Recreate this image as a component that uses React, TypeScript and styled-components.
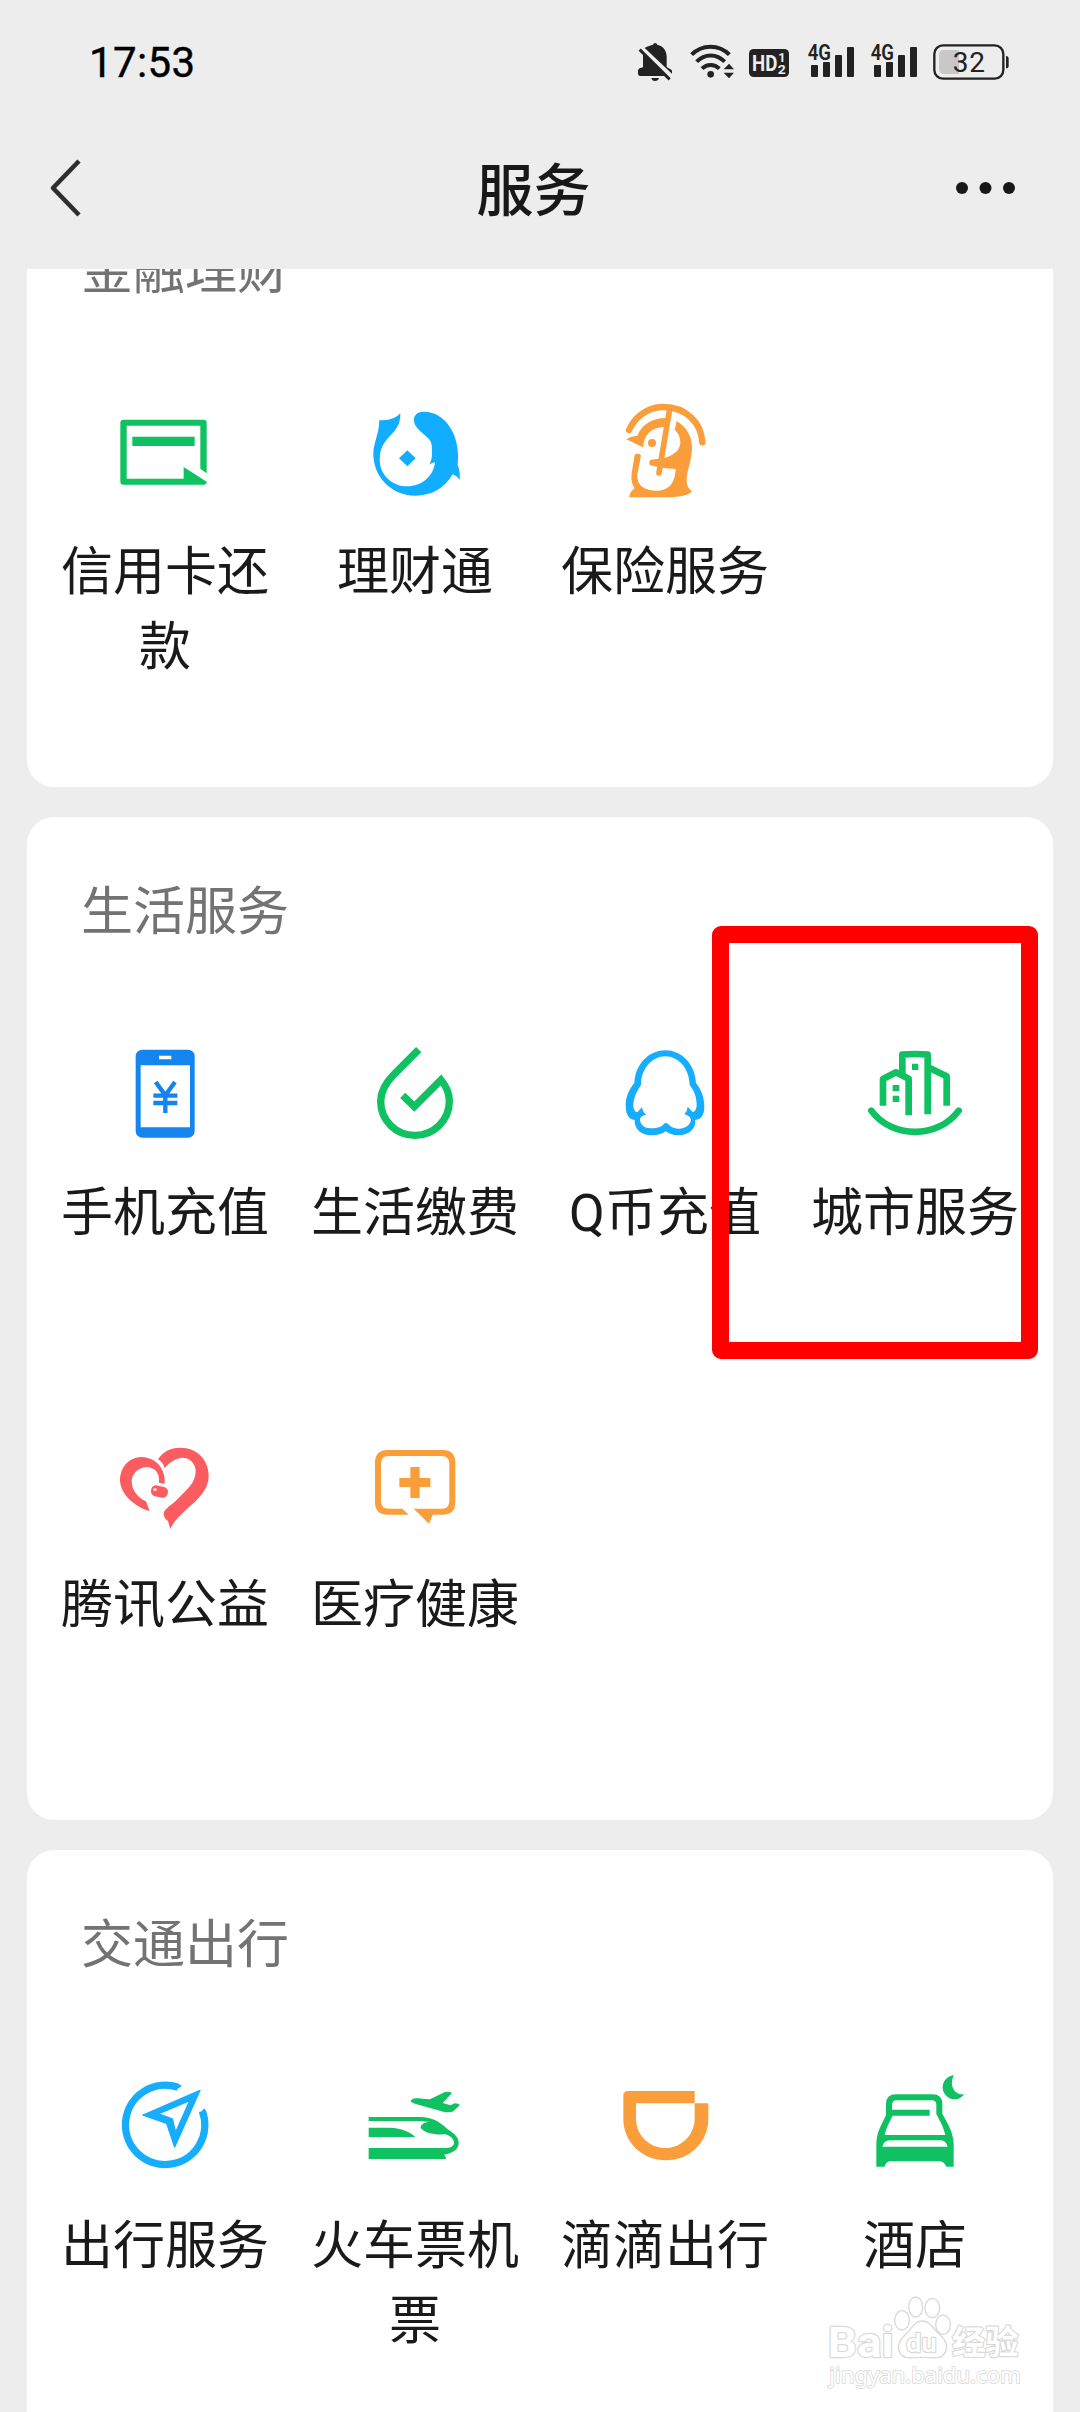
import React from "react";
import styled, { createGlobalStyle } from "styled-components";

const GREEN = "#0fc160";
const BLUE = "#17adff";
const ORANGE = "#fa9e3b";
const RED = "#fa5c5f";
const INK = "#222222";

const GlobalStyle = createGlobalStyle`
  * { box-sizing: border-box; }
  body {
    margin: 0;
    background: #ededed;
    font-family: Roboto, "Noto Sans CJK SC", sans-serif;
  }
`;

const Screen = styled.div`
  position: relative;
  display: flex;
  flex-direction: column;
  width: 1080px;
  height: 2412px;
  overflow: hidden;
  background: #ededed;
`;

const StatusBar = styled.div`
  display: flex;
  align-items: center;
  justify-content: space-between;
  height: 125px;
  padding: 0 70px 0 89px;
`;

const Clock = styled.span`
  font-size: 42px;
  font-weight: 400;
  line-height: 50px;
  letter-spacing: 0.4px;
  color: #000;
  -webkit-text-stroke: 0.4px #000;
`;

const StatusIcons = styled.div`
  display: flex;
  align-items: center;
`;

const StatusIcon = styled.svg<{ $width: number; $gap?: number }>`
  display: block;
  width: ${(p) => p.$width}px;
  height: 45px;
  margin-left: ${(p) => p.$gap ?? 0}px;
  fill: ${INK};
`;

const NavBar = styled.header`
  display: grid;
  grid-template-columns: 120px 1fr 120px;
  align-items: center;
  height: 144px;
  padding: 0 50px 18px 48px;
`;

const NavTitle = styled.h1`
  margin: 0;
  padding: 7px 11px 0 0;
  font-size: 57px;
  font-weight: 500;
  line-height: 80px;
  text-align: center;
  color: #181818;
`;

const NavIcon = styled.svg<{ $width: number; $end?: boolean }>`
  display: block;
  width: ${(p) => p.$width}px;
  height: 64px;
  justify-self: ${(p) => (p.$end ? "end" : "start")};
`;

const Content = styled.main`
  flex: 1;
  display: flex;
  flex-direction: column;
  gap: 30px;
  padding: 0 27px;
  overflow: hidden;
`;

const Card = styled.section<{ $scrolled?: boolean }>`
  flex: none;
  margin-top: ${(p) => (p.$scrolled ? "-93px" : "0")};
  padding: 0 13px 3px;
  border-radius: 27px;
  background: #fff;
`;

const CardTitle = styled.h2`
  height: 216px;
  margin: 0;
  padding: 58px 0 0 41px;
  font-size: 52px;
  font-weight: 400;
  line-height: 75px;
  color: #737373;
`;

const Grid = styled.div`
  display: grid;
  grid-template-columns: repeat(4, 250px);
  grid-auto-rows: 392px;
`;

const Item = styled.div`
  display: flex;
  flex-direction: column;
  align-items: center;
`;

const ItemIcon = styled.svg`
  display: block;
  width: 120px;
  height: 120px;
`;

const Label = styled.span`
  width: 212px;
  margin-top: 23px;
  font-size: 52px;
  line-height: 75px;
  text-align: center;
  color: #1a1a1a;
`;

const Highlight = styled.div`
  position: absolute;
  left: 712px;
  top: 926px;
  width: 326px;
  height: 433px;
  border: 17px solid #ff0000;
  border-radius: 9px;
`;

const Watermark = styled.svg`
  position: absolute;
  left: 826px;
  top: 2294px;
  width: 198px;
  height: 97px;
`;

type Service = { name: string; box: string; art: React.ReactNode };

const finance: Service[] = [
  {
    name: "信用卡还款",
    box: "195 37",
    art: (
      <g fill={GREEN}>
        <path d="M250 120H491Q500 120 500 129V281L481 267V138H260V297H431V262L500 306Q500 315 491 315H250Q241 315 241 306V129Q241 120 250 120Z" />
        <path d="M277 171H464V199H277Z" />
      </g>
    ),
  },
  {
    name: "理财通",
    box: "75 37",
    art: (
      <g fill="#11adff">
        <path d="M148 121Q190 125 211 101Q213 130 193 155C170 181 149 197 149 240C150 290 190 320 232 320C274 320 310 292 315 248Q306 249 298 255C304 244 306 235 306 218C306 190 306 185 284 166C262 147 250 137 252 115C257 98 272 96 284 96C345 98 383 160 384 225Q384 242 383 256Q391 275 389 300Q380 288 368 284C342 328 302 348 257 348C185 348 130 292 130 222C130 190 147 165 148 121Z" />
        <path d="M232 212L257 236L232 260L207 236Z" />
      </g>
    ),
  },
  {
    name: "保险服务",
    box: "825 37",
    art: (
      <g fill={ORANGE} stroke="none">
        <path d="M897 151C925 92 975 82 1000 82C1068 82 1114 130 1117 188" fill="none" stroke={ORANGE} strokeWidth="19" strokeLinecap="round" />
        <path d="M1019 88L987 280" fill="none" stroke={ORANGE} strokeWidth="17" strokeLinecap="round" />
        <path d="M889 179Q905 168 922 169C935 130 975 113 1012 115L1008 142C965 140 942 165 939 203Z" />
        <circle cx="966" cy="190" r="12" />
        <path d="M1040 124C1070 142 1087 172 1086 206C1085 245 1070 275 1070 300C1070 322 1078 326 1086 336C1070 350 1040 353 1000 353H897Q900 335 914 326C905 312 903 300 905 280L914 226Q922 217 933 227L922 285C920 318 945 333 980 333C1025 333 1035 300 1037 268L1000 265L960 257Q955 248 962 240L1005 235C1042 222 1052 205 1051 185C1050 168 1042 158 1034 150Z" />
      </g>
    ),
  },
];

const living: Service[] = [
  {
    name: "手机充值",
    box: "195 39",
    art: (
      <g>
        <rect x="287" y="89" width="177" height="264" rx="20" fill="#1485ee" />
        <path d="M302 136H450V322H302ZM357 107H394V118H357Z" fill="#fff" />
        <path d="M347 186L376 226L405 186M340 227H412M340 249H412M376 222V279" fill="none" stroke="#1485ee" strokeWidth="13" />
      </g>
    ),
  },
  {
    name: "生活缴费",
    box: "945 39",
    art: (
      <path d="M1136 89L1062 163C1035 190 1022 215 1022 244C1022 302 1068 346 1125 346C1182 346 1228 300 1228 244C1228 222 1220 200 1203 180L1123 260L1088 226" fill="none" stroke={GREEN} strokeWidth="22" />
    ),
  },
  {
    name: "Q币充值",
    box: "135 369",
    art: (
      <path
        fill={BLUE}
        fillRule="evenodd"
        d="M316 421C365 421 405 462 408 519C425 540 433 565 433 590C433 612 425 628 406 630C408 655 388 676 355 676C338 676 325 670 317 664C308 670 295 676 275 676C245 676 222 658 224 630C205 628 197 612 197 585C197 560 208 537 223 519C226 462 267 421 316 421ZM316 439C278 439 243 475 243 525C228 548 220 565 220 590C222 602 228 608 233 606L246 591C247 602 252 608 259 614Q240 618 240 628C240 645 255 655 272 655C295 655 308 648 312 641Q318 637 324 641C330 650 345 656 360 656C382 655 393 640 393 628Q388 616 373 613Q382 604 383 590L397 605C403 608 410 598 410 585C410 560 402 542 389 525C388 475 355 439 316 439Z"
      />
    ),
  },
  {
    name: "城市服务",
    box: "885 369",
    art: (
      <g fill="none" stroke={GREEN} strokeWidth="20" strokeLinejoin="round">
        <path d="M969 587V507L1008 487L1046 506V616M1027 494V434Q1065 430 1103 434V613M1104 472L1160 499V587" />
        <path d="M934 602C995 687 1135 687 1196 602" strokeLinecap="round" />
        <path d="M1056 461H1075V480H1056ZM998 525H1018V544H998ZM998 557H1018V576H998Z" fill={GREEN} stroke="none" />
      </g>
    ),
  },
  {
    name: "腾讯公益",
    box: "195 15",
    art: (
      <g fill={RED}>
        <path d="M354 118C370 92 395 83 422 83C470 83 508 120 506 170C504 215 465 245 435 272C412 293 398 310 391 327L384 303C376 298 370 290 371 279C375 265 395 255 410 240C440 208 468 190 467 150C464 125 445 112 425 113C405 115 388 128 374 144Q370 128 354 118Z" />
        <path d="M329 273L318 244C292 232 275 210 275 183C276 160 295 143 318 141C345 141 360 160 357 188L374 192C378 150 350 112 305 111C265 112 240 143 240 182C243 225 285 260 329 273Z" />
        <rect x="333" y="198" width="51" height="33" rx="15" transform="rotate(12 358 214)" />
        <ellipse cx="345" cy="209" rx="6" ry="4" fill="#fff" opacity="0.8" />
      </g>
    ),
  },
  {
    name: "医疗健康",
    box: "945 15",
    art: (
      <g fill={ORANGE}>
        <path d="M1043 90H1208Q1246 90 1246 128V246Q1246 284 1208 284H1178L1167 311L1121 266H1205Q1228 266 1228 243V131Q1228 108 1205 108H1046Q1023 108 1023 131V243Q1023 266 1046 266H1087L1106 284H1043Q1005 284 1005 246V128Q1005 90 1043 90Z" />
        <path d="M1078 174H1111V141H1139V174H1171V201H1139V234H1111V201H1078Z" />
      </g>
    ),
  },
];

const travel: Service[] = [
  {
    name: "出行服务",
    box: "195 51",
    art: (
      <g>
        <path d="M414 115A119 119 0 1 0 487 186" fill="none" stroke={BLUE} strokeWidth="22" />
        <path d="M407 104Q420 104 425 110Q420 118 403 122ZM480 204Q483 185 493 178Q500 190 501 204Z" fill={BLUE} />
        <path fillRule="evenodd" fill={BLUE} stroke={BLUE} strokeWidth="4" strokeLinejoin="round" d="M480 124L309 198L380 223L404 294ZM449 155L355 195L397 210L407 250Z" />
      </g>
    ),
  },
  {
    name: "火车票机票",
    box: "945 51",
    art: (
      <g fill={GREEN}>
        <path d="M986 204H1145C1185 206 1205 225 1222 240C1245 255 1256 265 1256 282C1256 300 1240 312 1213 317L1219 330H986V297H1210C1235 297 1243 290 1242 278C1238 265 1225 258 1215 256C1180 258 1150 250 1142 236C1142 225 1155 219 1172 219Q1155 217 1140 216H986Z" />
        <path d="M986 236H1050C1085 238 1110 248 1126 264H986Z" />
        <path d="M1112 156C1118 143 1135 148 1170 151L1213 130Q1225 126 1236 132L1208 162L1232 169L1240 164Q1252 161 1260 168L1240 187Q1230 192 1210 188L1125 164Q1113 161 1112 156Z" />
      </g>
    ),
  },
  {
    name: "滴滴出行",
    box: "135 51",
    art: (
      <path fill={ORANGE} fillRule="evenodd" d="M204 126H404V163H445V210C445 280 388 334 318 334C248 334 190 280 190 210V140Q190 126 204 126ZM228 163V212C230 260 270 297 316 297C362 297 402 260 404 212V163Z" />
    ),
  },
  {
    name: "酒店",
    box: "885 51",
    art: (
      <g fill={GREEN}>
        <path
          fillRule="evenodd"
          d="M978 199C960 235 949 255 949 285V353H973Q979 337 993 337H1137Q1152 337 1159 353H1181V285C1181 255 1165 225 1147 195V165Q1147 136 1117 136H1008Q978 136 978 165ZM996 182V168Q996 154 1010 154H1116Q1129 154 1129 168V195C1145 225 1150 235 1156 258H974C978 240 985 225 998 200H1109V182ZM967 293Q972 274 990 274H1142Q1158 275 1163 293Z"
        />
        <path d="M1182 79A36 36 0 1 0 1213 136C1185 140 1165 110 1182 79Z" />
      </g>
    ),
  },
];

const Services = ({ title, items, scrolled }: { title: string; items: Service[]; scrolled?: boolean }) => (
  <Card $scrolled={scrolled}>
    <CardTitle>{title}</CardTitle>
    <Grid>
      {items.map((s) => (
        <Item key={s.name}>
          <ItemIcon viewBox={`${s.box} 360 360`}>{s.art}</ItemIcon>
          <Label>{s.name}</Label>
        </Item>
      ))}
    </Grid>
  </Card>
);

const Signal = ({ gap }: { gap: number }) => (
  <StatusIcon $width={48} $gap={gap} viewBox="621 60 144 135">
    <text x="623" y="121" fontFamily="Roboto" fontSize="64" fontWeight="600" textLength="70" lengthAdjust="spacingAndGlyphs">4G</text>
    <rect x="633" y="135" width="21" height="36" rx="3" />
    <rect x="669" y="126" width="21" height="45" rx="3" />
    <rect x="705" y="105" width="21" height="66" rx="3" />
    <rect x="741" y="81" width="21" height="90" rx="3" />
  </StatusIcon>
);

export default function App() {
  return (
    <>
      <GlobalStyle />
      <Screen>
        <StatusBar>
          <Clock>17:53</Clock>
          <StatusIcons>
            <StatusIcon $width={36} viewBox="111 60 108 135">
              <path d="M134 84C143 78 152 76 159 74Q160 69 165 69Q171 69 172 74C190 78 200 92 200 110V141L215 150Q217 154 216 161ZM129 103L194 168H121Q114 168 114 161V151Q116 144 129 142ZM154 174H177Q175 183 165 183Q156 183 154 174Z" />
              <path d="M119 89L209 178" stroke={INK} strokeWidth="9" />
            </StatusIcon>
            <StatusIcon $width={46} $gap={16} viewBox="267 60 138 135">
              <g fill="none" stroke={INK} strokeWidth="12">
                <path d="M275 104C306 72 357 72 388 104" />
                <path d="M290 125C314 100 350 100 374 125" />
                <path d="M306 146C321 131 343 131 358 146" />
              </g>
              <circle cx="332" cy="163" r="10" />
              <path d="M387 131L402 148H371ZM371 158H402L387 175Z" />
            </StatusIcon>
            <StatusIcon $width={42} $gap={13} viewBox="444 60 126 135">
              <rect x="447" y="87" width="120" height="84" rx="14" />
              <g fill="#ededed" fontFamily="Roboto" fontWeight="700">
                <text x="456" y="152" fontSize="66" textLength="76" lengthAdjust="spacingAndGlyphs">HD</text>
                <text x="535" y="125" fontSize="38">1</text>
                <text x="533" y="161" fontSize="40" textLength="24" lengthAdjust="spacingAndGlyphs">2</text>
              </g>
            </StatusIcon>
            <Signal gap={17} />
            <Signal gap={15} />
            <StatusIcon $width={77} $gap={15} viewBox="999 60 231 135">
              <path d="M1032 90H1077V162H1032Q1017 162 1017 147V105Q1017 90 1032 90Z" fill="#c8c8c8" />
              <rect x="1003" y="76" width="207" height="100" rx="26" fill="none" stroke={INK} strokeWidth="7" />
              <path d="M1218 108Q1226 108 1226 116V138Q1226 145 1218 145Z" />
              <text x="1058" y="155" fontFamily="Roboto" fontSize="84" textLength="97" lengthAdjust="spacing">32</text>
            </StatusIcon>
          </StatusIcons>
        </StatusBar>

        <NavBar>
          <NavIcon $width={34} viewBox="0 0 34 64">
            <path d="M31 5L5 32L31 59" fill="none" stroke="#2e2e2e" strokeWidth="4.6" strokeLinejoin="round" />
          </NavIcon>
          <NavTitle>服务</NavTitle>
          <NavIcon $width={74} $end viewBox="0 0 74 64" fill="#181818">
            <circle cx="6" cy="32" r="6" />
            <circle cx="29.5" cy="32" r="6" />
            <circle cx="53" cy="32" r="6" />
          </NavIcon>
        </NavBar>

        <Content>
          <Services title="金融理财" items={finance} scrolled />
          <Services title="生活服务" items={living} />
          <Services title="交通出行" items={travel} />
        </Content>

        <Highlight />

        <Watermark viewBox="798 732 594 291">
          <g fill="#fff" stroke="#d9d9d9" strokeWidth="4" strokeLinejoin="round">
            <ellipse cx="1026" cy="811" rx="22" ry="29" />
            <ellipse cx="1067" cy="771" rx="21" ry="30" />
            <ellipse cx="1117" cy="774" rx="22" ry="29" />
            <ellipse cx="1149" cy="824" rx="22" ry="29" />
            <path d="M1087 813C1110 813 1118 835 1138 853C1160 872 1165 890 1155 908C1143 930 1120 922 1087 922C1054 922 1032 930 1019 908C1009 888 1018 870 1038 852C1056 835 1064 813 1087 813Z" />
            <g paintOrder="stroke" strokeWidth="7" fontFamily="Roboto" fontWeight="700">
              <text x="803" y="920" fontSize="130" textLength="198" lengthAdjust="spacingAndGlyphs">Bai</text>
              <text x="1038" y="907" fontSize="80" fontWeight="500" textLength="92" lengthAdjust="spacingAndGlyphs">du</text>
              <text x="1176" y="912" fontFamily="Noto Sans CJK SC" fontSize="100">经验</text>
              <text x="808" y="998" fontFamily="Noto Sans" fontSize="64" fontWeight="400" strokeWidth="5" textLength="574" lengthAdjust="spacingAndGlyphs">jingyan.baidu.com</text>
            </g>
          </g>
        </Watermark>
      </Screen>
    </>
  );
}
